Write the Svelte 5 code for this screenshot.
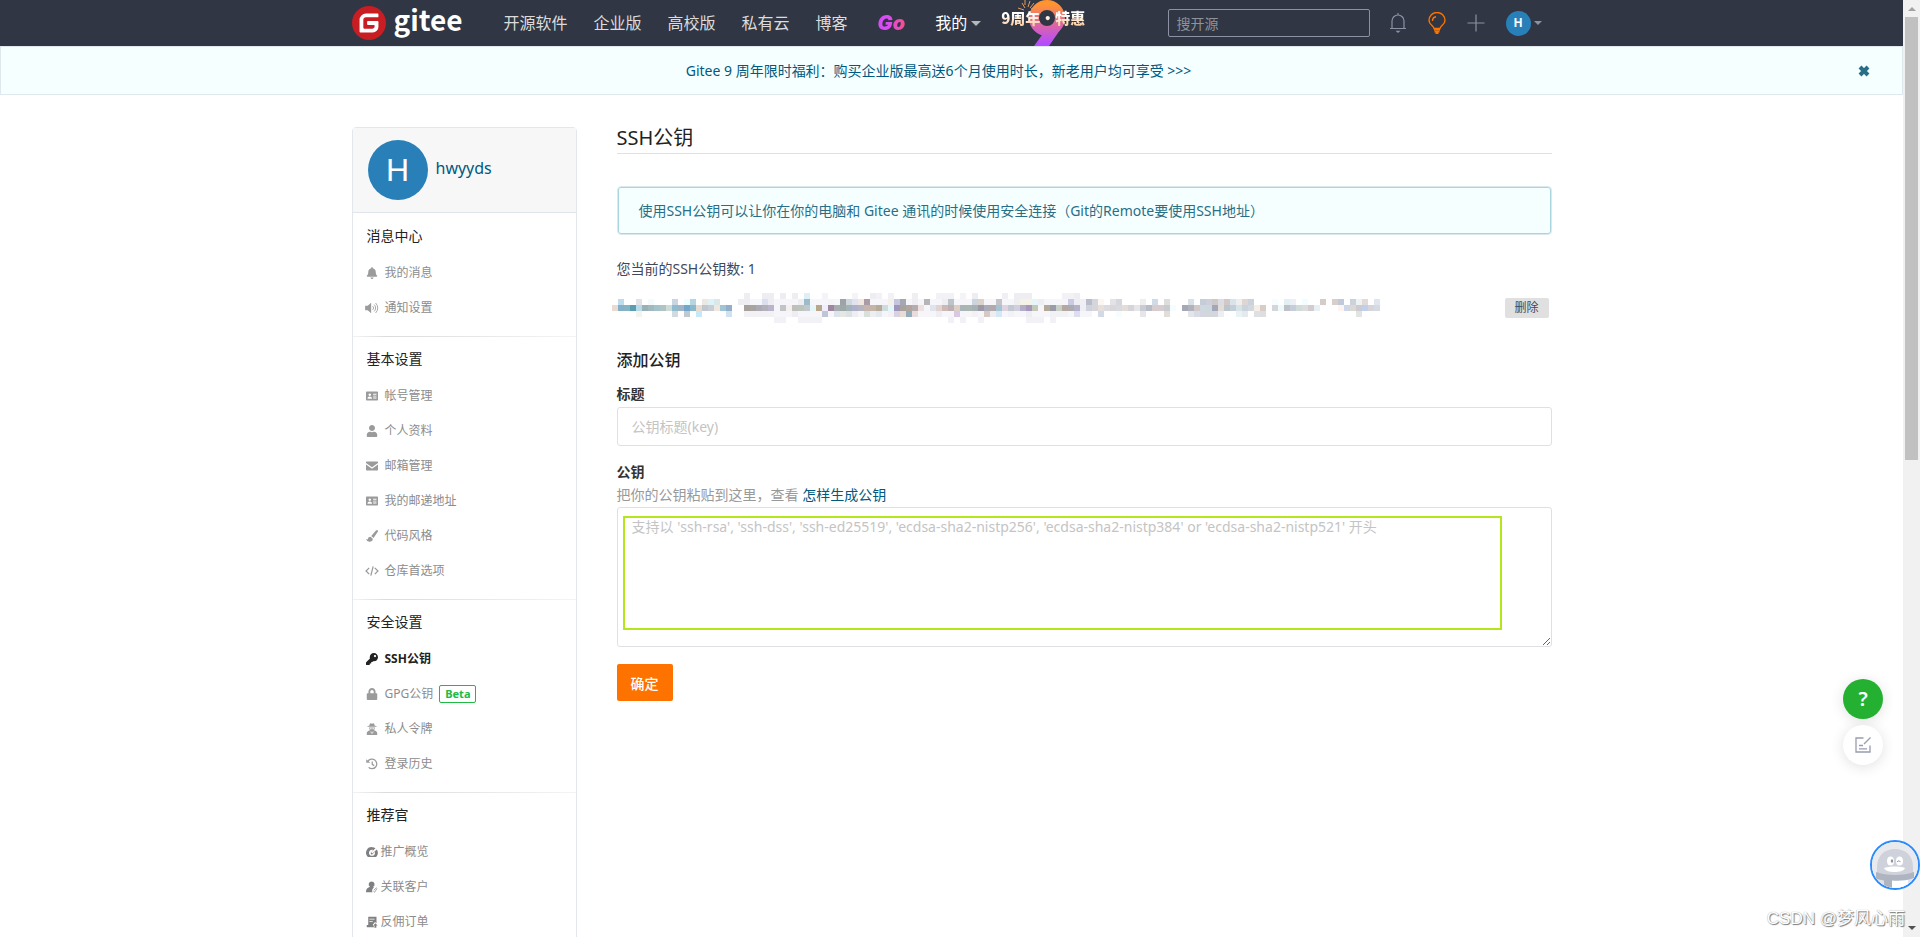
<script>
  const icons = {
    bell: { vb: '0 0 448 512', f: 'M224 512c35.32 0 63.97-28.65 63.97-64H160.03c0 35.35 28.65 64 63.97 64zm215.39-149.71c-19.32-20.76-55.47-51.99-55.47-154.29 0-77.7-54.48-139.9-127.94-155.16V32c0-17.67-14.32-32-31.98-32s-31.98 14.33-31.98 32v20.84C118.56 68.1 64.08 130.3 64.08 208c0 102.3-36.15 133.53-55.47 154.29-6 6.45-8.66 14.16-8.61 21.71.11 16.4 12.98 32 32.1 32h383.8c19.12 0 32-15.6 32.1-32 .05-7.55-2.61-15.27-8.61-21.71z' },
    volume: { vb: '0 0 16 14', wide: true, f: 'M0 4.500h3L7 1v12L3 9.500H0z', s: 'M8.800 4.800a3 3 0 0 1 0 4.400M10.500 3a5.500 5.500 0 0 1 0 8M12.200 1.200a8 8 0 0 1 0 11.600', w: 1 },
    card: { vb: '0 0 16 14', f: 'M1 1h14a1 1 0 0 1 1 1v10a1 1 0 0 1-1 1H1a1 1 0 0 1-1-1V2a1 1 0 0 1 1-1zM5 3.500a1.700 1.700 0 1 0 .1 0zM2 10.500h6c0-2-1.200-3-3-3s-3 1-3 3zM9.500 4v1.300H14V4zM9.500 6.500v1.300H14V6.500zM9.500 9v1.300H14V9z' },
    user: { vb: '0 0 448 512', f: 'M224 256c70.700 0 128-57.300 128-128S294.700 0 224 0 96 57.300 96 128s57.300 128 128 128zm89.600 32h-16.700c-22.200 10.200-46.900 16-72.900 16s-50.600-5.800-72.900-16h-16.700C60.200 288 0 348.200 0 422.400V464c0 26.500 21.500 48 48 48h352c26.500 0 48-21.500 48-48v-41.600c0-74.200-60.200-134.400-134.400-134.400z' },
    mail: { vb: '0 0 16 14', f: 'M1 1h14a1 1 0 0 1 1 1v1L8 8.500 0 3V2a1 1 0 0 1 1-1zM0 5l8 5.500L16 5v7a1 1 0 0 1-1 1H1a1 1 0 0 1-1-1z' },
    brush: { vb: '0 0 16 16', f: 'M15.500.5c.7.7.5 1.500 0 2.300L10 10.500 7 8 13.300.8c.7-.7 1.500-.9 2.200-.3zM6 9l3 2.500c.2 2.500-1.500 4-4 4-2.700 0-4.300-1.300-5-3.500 1.500 1 2.300.7 2.600-.4C3 9.800 4.300 8.900 6 9z' },
    code: { vb: '0 0 20 16', wide: true, s: 'M6 3.500 1.500 8 6 12.500M14 3.500 18.500 8 14 12.500M11.700 1.500 8.300 14.500', w: 1.8 },
    key: { vb: '0 0 512 512', f: 'M512 176.001C512 273.203 433.202 352 336 352c-11.220 0-22.190-1.062-32.827-3.069l-24.012 27.014A23.999 23.999 0 0 1 261.223 384H224v40c0 13.255-10.745 24-24 24h-40v40c0 13.255-10.745 24-24 24H24c-13.255 0-24-10.745-24-24v-78.059c0-6.365 2.529-12.470 7.029-16.971l161.802-161.802C163.108 213.814 160 195.271 160 176 160 78.798 238.797.001 335.999 0 433.488-.001 512 78.511 512 176.001zM336 128c0 26.510 21.490 48 48 48s48-21.490 48-48-21.490-48-48-48-48 21.490-48 48z' },
    lock: { vb: '0 0 448 512', f: 'M400 224h-24v-72C376 68.200 307.800 0 224 0S72 68.200 72 152v72H48c-26.500 0-48 21.500-48 48v192c0 26.500 21.500 48 48 48h352c26.500 0 48-21.500 48-48V272c0-26.500-21.500-48-48-48zm-104 0H152v-72c0-39.700 32.300-72 72-72s72 32.300 72 72v72z' },
    spy: { vb: '0 0 16 16', f: 'M5.500.5C6.500 0 7 .9 8 .9S9.500 0 10.500.5c.6.8 1 2 1.200 3l2.300.6v.9H2v-.9l2.300-.6c.2-1 .6-2.200 1.200-3zM4 6h8c0 1.500-.4 2.800-1.300 3.700 2.600.6 4.300 2.200 4.300 4.300v1.200c0 .5-.3.8-.8.8H1.800c-.5 0-.8-.3-.8-.8V14c0-2.100 1.700-3.700 4.300-4.300C4.400 8.800 4 7.500 4 6zM5 7v1.200h2.500V7zM8.500 7v1.200H11V7zM6 11l1 4 .6-3zM10 11l-1 4-.6-3z' },
    history: { vb: '0 0 16 16', s: 'M2.500 4.500A6.400 6.400 0 1 1 3.500 12.500M8.300 4.500V8.500L11 10.200', w: 1.7, f: 'M.3 1.500 5.800 6.300H.3z' },
    gauge: { vb: '0 0 16 16', f: 'M8 1.500c2 0 3.500.6 4.700 1.600L7 8.200l1.500 1.700 5.800-5.300A7.300 7.300 0 0 1 13.500 14.500H2.500A7.500 7.500 0 0 1 8 1.500zM8 5C5.500 5 4 7 4 9.200 4 11.500 5.800 13 8 13s4-1.500 4-3.800c0-.6-.1-1-.3-1.500L9 10.800c-1.300 1.200-3.500-.6-2.400-2.200L9.500 5.300C9 5.100 8.500 5 8 5z' },
    link: { vb: '0 0 16 16', f: 'M7.500.5a4 4 0 0 1 2.200 7.300c.3.300.5.700.8 1-2 1.500-2.700 3.500-2 6.200H0c0-3.500 1.200-5.800 5.300-7.200A4 4 0 0 1 7.500.5z', s: 'M10.500 12.500l2-2.500 1.500 1-2.500 4-1.500-1M13.500 9l1.500 1', w: 0.9 },
    order: { vb: '0 0 16 16', f: 'M2 1h12v8.500l-2-1.500-3 3.500 2 3.500H1v-3h2V1zM4.500 3.500v1.300h7V3.500zM4.500 6.500v1.300H9V6.500zM12.500 9.500l3 3h-1.700v3h-2.500v-3H9.700z' }
  };

  const sections = [
    { title: '消息中心', items: [['bell', '我的消息'], ['volume', '通知设置']] },
    { title: '基本设置', items: [['card', '帐号管理'], ['user', '个人资料'], ['mail', '邮箱管理'], ['card', '我的邮递地址'], ['brush', '代码风格'], ['code', '仓库首选项']] },
    { title: '安全设置', items: [['key', 'SSH公钥'], ['lock', 'GPG公钥'], ['spy', '私人令牌'], ['history', '登录历史']] },
    { title: '推荐官', compact: true, items: [['gauge', '推广概览'], ['link', '关联客户'], ['order', '反佣订单']] }
  ];

  // Each row of the masked key: runs of "start column: colours".
  const maskRows = [
    '22:eeeef2|25:eeeef2 eeeef2|28:eeeef2|30:eeeef2|32:dff0f5|35:f4f4f8|40:f4f4f8|43:eeeef2 f2f2f6|46:f2f2f6|50:f0eef0|54:f2f2f6 f2f2f6 f2f2f6|58:f4f4f8|60:eeeef2|65:f0f0f4|67:eeeef2 eeeef2 eeeef2|75:f2f2f6 f2f2f6 eeeef2',
    '1:bddcec|4:dfe3e8|6:f2fcff|10:c9d6e2|12:ecffff b5d5e0|15:ede8e0 def3f8 dce8e8|21:eeeef2|22:eeeef2 f6f6fa f6f6fa dcdfee eeeef2 f6f6fa f6f6fa f6f6fa f6f6fa eeeef2 9abccb f6f6fa f6f6fa f6f6fa f4f4f8 f6f6fa 9ea3a8 cfd8de dfe3f2 f0e8e0 ab9ba5 f6f6fa f6f6fa f6f6fa f5f0ea c5c5e0 a5a8b2 f6f6fa eeeef2 f6f6fa b5b5b8 f6f6fa f6f6fa eeeef2 bcc3cb f6f6fa f6f6fa f6f6fa cbd5df dbd2cb f6f6fa f6f6fa c4c4c8 f6f6fa f6f6fa eeeef2 f5f3e6 f5f3e6 e5f5fa eeeef2 f6f6fa f6f6fa f6f6fa f6f6fa cacbe0 eeeef2 f0f0f4 b9bcca d5d5dc fcf6f2|83:e3e3e5 d5d7de|88:eeeeee|90:cfdce8|92:dddddd|96:d8e0e8|98:c5cdd8 cdd0dc cfc8c8 dcdde2 d2c8c8 d8e4ec eeeeee ddd6d2 cbd2da|110:f5fdff|112:e2eff5 ecf0f5|115:f2fdff|118:d5cbc8|120:d8ceca c0c8dc|123:ccd2dc ecf3f2 e3d9d9|127:e0e5ee',
    '0:eadbd0 85b0ca 85b3c4 5b9db0 b5dce8 9ab0b8 a3b8bc a0c3ce b0c4c4 cfdbd8 8fbccf a0b4c8 72a6ca 8ab8cc e8dcd0 bfc8d0 c8ced8 f0e8dc a0c4d4 93aec8|22:a8a09a a8a4a0 acaab4 b3b0ba bbb5cc f6f6fa c0c4c8 f5f0ee bfc0be bcc4bc c0c8cc e4f6fa b8a68a eeeeff 9f869e a5adb0 9fa8a8 a2b3b6 aeafcb b5b5c2 c5b5b0 c4b5a8 b5ab98 d0dcdc e4f6fa a095bb a8a29e b0a49c b4acb0 efe0e0 f6f6fa dfe3ee e0d3d0 ccb8b4 bcb0b4 dccfc4 a8b4b8 a8b8b0 a8b0b4 9c98a8 a8acb8 b5a8ac a4c4d4 dfd3e2 c4c8d4 d0d0dc b4acc8 a498bc c4c8b8 f6f6fa b4a898 9a9caa c8cfc4 b4a8a0 acacac b4b0cc eeeef4 cfd2da d5d5da e6e0dc dcdce0 d8d8dc dadade|85:e3ddd8 d5d5d8 e5e5ea c8ccd2 b8bbc8 d8cccf d8ccd0 c8ccd0 f5fdff|95:a6a8b8 b0b2be cfcac8 cfd8e0 cbd8dc a4a7ba e3ddd8 bcc4cc c4ced8 d8e4e4 cbd4dc d2d8de f5efe8 d8ccc8|110:d5d5dc edfbfb bfc0c8 c5cdda d0dcda dcdcdc d3cccf e8f0f5|121:fdf3f0 ccd8e8 dcd8d4 ccccd0 c0d0ec d5d5da d5dae4',
    '4:f5f3ee|10:d3dade|12:c0c8d0|14:c5e9f5|19:cfe2f0|22:f2f2f6 f2f2f6 f2f2f6 f2f2f6 f2f2f6 f6f6fa f6f6fa f6f6fa eeeef2 f6f6fa f6f6fa f6f6fa f6f6fa bfc5d4 f6f6fa dde3ec e3e8e2 dce2e4 eeeef2 f6f6fa d8e0dc eeeef2 e4e8f0 f6f6fa f2f2f6 dad0e4 e8dcd4 95adba eadcdc f6f6fa f6f6fa f6f6fa eeeef2 f6f6fa f6f6fa d8c8e4 f6f6fa f6f6fa f2f2f6 f6f6fa d8c8c4 eeeef2 d2e8f5 f6f6fa f2f2f6 f6f6fa f6f6fa eeeef2 f6f6fa f6f6fa f6f6fa f2f2f6 f2f2f6 f2f2f6 f6f6fa dcdff0 f6f6fa f6f6fa|81:d2dae6|84:f5fdff|88:e5e5ea|92:e3ddd8|96:e3e5ea d8dbe3 d3d6dc d3d6dc d3d6dc eceef2|104:e8f3f8 e5e8ec|107:dfe0e4 dfdedf|124:e3e3e3',
    '27:f2f2f6 f2f2f6|31:f2f2f6 f2f2f6 f2f2f6 f2f2f6|56:f2f2f6|58:f2f2f6|61:f2f2f6|69:f2f2f6 f2f2f6 f2f2f6|73:f2f2f6'
  ];
  const cells = maskRows.flatMap((row, y) =>
    row.split('|').flatMap((run) => {
      const [start, colours] = run.split(':');
      return colours.split(' ').map((c, i) => ({ x: (Number(start) + i) * 6, y: y * 6, c: '#' + c }));
    })
  );
</script>

{#snippet icon(name)}
  {@const i = icons[name]}
  <svg class="ico" class:wide={i.wide} viewBox={i.vb} aria-hidden="true">
    {#if i.f}<path d={i.f} fill="currentColor" fill-rule="evenodd" />{/if}
    {#if i.s}<path d={i.s} fill="none" stroke="currentColor" stroke-width={i.w} />{/if}
  </svg>
{/snippet}

<div class="screen">
  <div class="page">
    <header>
      <div class="wrap bar">
        <a class="logo" href="#home" aria-label="gitee">
          <svg width="34" height="34" viewBox="0 0 24 24" aria-hidden="true">
            <circle cx="12" cy="12" r="11" fill="#fff" />
            <path fill="#c71d23" d="M11.984 0A12 12 0 0 0 0 12a12 12 0 0 0 12 12 12 12 0 0 0 12-12A12 12 0 0 0 12 0a12 12 0 0 0-.016 0zm6.090 5.333c.328 0 .593.266.592.593v1.482a.594.594 0 0 1-.593.592H9.777c-.982 0-1.778.796-1.778 1.778v5.630c0 .327.266.592.593.592h5.630c.982 0 1.778-.796 1.778-1.778v-.296a.593.593 0 0 0-.592-.593h-4.150a.592.592 0 0 1-.592-.592v-1.482a.593.593 0 0 1 .593-.592h6.815c.327 0 .593.265.593.592v3.408a4 4 0 0 1-4 4H5.926a.593.593 0 0 1-.593-.593V9.778a4.444 4.444 0 0 1 4.445-4.444h8.296z" />
          </svg>
          <span>gitee</span>
        </a>
        <nav>
          <a href="#os">开源软件</a>
          <a href="#ent">企业版</a>
          <a href="#edu">高校版</a>
          <a href="#cloud">私有云</a>
          <a href="#blog">博客</a>
          <a href="#go" class="go">Go</a>
          <a href="#mine" class="mine">我的<i class="caret"></i></a>
        </nav>
        <a class="promo" href="#promo">
          <svg class="nine" width="60" height="46" viewBox="0 0 60 46" aria-hidden="true">
            <defs>
              <linearGradient id="nineFill" gradientUnits="userSpaceOnUse" x1="0" y1="0" x2="0" y2="46">
                <stop offset="0.1" stop-color="#ff9330" />
                <stop offset="0.5" stop-color="#e0689c" />
                <stop offset="0.95" stop-color="#b44cff" />
              </linearGradient>
            </defs>
            <circle cx="27" cy="18" r="13" fill="none" stroke="url(#nineFill)" stroke-width="10" />
            <path d="M22 35 40 30 29 46H14z" fill="url(#nineFill)" />
            <path d="M8 7 10 1M5 8 2 3M4 10-2 8M10 8l4-5M5 5 5 0M11 9l6-2" stroke="#e89a58" stroke-width="1" fill="none" />
          </svg>
          <span>9周年·特惠</span>
        </a>
        <input class="search" type="search" placeholder="搜开源" aria-label="搜开源" />
        <div class="tools">
          <a href="#notice" aria-label="通知">
            <svg width="18" height="22" viewBox="0 0 18 22" fill="none" stroke="#8c92a4" stroke-width="1.2">
              <path d="M9 1v1.500M3 16.500V9a6 6 0 0 1 12 0v7.500M1 16.500h16" />
              <path d="M6.500 18.800h5L9 21z" fill="#8c92a4" stroke="none" />
            </svg>
          </a>
          <a href="#tips" aria-label="提示">
            <svg width="18" height="22" viewBox="0 0 18 22" fill="none" stroke="#fe7300" stroke-width="1.400">
              <path d="M6 16.500C5.500 13.500 1 12.500 1 8.500a8 8 0 0 1 16 0c0 4-4.500 5-5 8zM4.500 9C4.500 6.500 6 5 8 4.700M6 18h6M6.500 19.700h5M7.500 21.300h3" />
            </svg>
          </a>
          <a href="#new" aria-label="新建">
            <svg width="18" height="18" viewBox="0 0 18 18"><path d="M9 0.500v17M.5 9h17" stroke="#8c92a4" stroke-width="1.200" /></svg>
          </a>
          <a href="#me" class="me"><b>H</b><i class="caret"></i></a>
        </div>
      </div>
    </header>

    <div class="notice">
      <a href="#gift">Gitee 9 周年限时福利：购买企业版最高送6个月使用时长，新老用户均可享受 &gt;&gt;&gt;</a>
      <button type="button" aria-label="关闭">
        <svg width="12" height="12" viewBox="0 0 12 12"><path d="M2 2l8 8M10 2l-8 8" stroke="#276f86" stroke-width="4" /></svg>
      </button>
    </div>

    <div class="wrap content">
      <aside>
        <div class="profile">
          <span class="avatar">H</span>
          <a href="#profile">hwyyds</a>
        </div>
        {#each sections as s}
          <section class:compact={s.compact}>
            <h2>{s.title}</h2>
            <ul>
              {#each s.items as [ic, label]}
                <li>
                  <a class="item" href="#{label}" class:active={label === 'SSH公钥'}>
                    <span class="slot">{@render icon(ic)}</span>{label}
                    {#if label === 'GPG公钥'}<em>Beta</em>{/if}
                  </a>
                </li>
              {/each}
            </ul>
          </section>
        {/each}
      </aside>

      <main>
        <h1>SSH公钥</h1>
        <p class="message">使用SSH公钥可以让你在你的电脑和 Gitee 通讯的时候使用安全连接（Git的Remote要使用SSH地址）</p>
        <p class="count">您当前的SSH公钥数: 1</p>
        <div class="keyrow">
          <svg width="768" height="30" viewBox="0 0 768 30" shape-rendering="crispEdges" aria-hidden="true">
            {#each cells as c}<rect x={c.x} y={c.y} width="6" height="6" fill={c.c} />{/each}
          </svg>
          <button type="button">删除</button>
        </div>
        <form onsubmit={(e) => e.preventDefault()}>
          <h3>添加公钥</h3>
          <label for="key-title">标题</label>
          <input id="key-title" type="text" placeholder="公钥标题(key)" />
          <label for="key-body">公钥</label>
          <p class="help">把你的公钥粘贴到这里，查看 <a href="#howto">怎样生成公钥</a></p>
          <div class="area">
            <textarea id="key-body" placeholder="支持以 'ssh-rsa', 'ssh-dss', 'ssh-ed25519', 'ecdsa-sha2-nistp256', 'ecdsa-sha2-nistp384' or 'ecdsa-sha2-nistp521' 开头"></textarea>
            <div class="mark"></div>
          </div>
          <button class="submit" type="submit">确定</button>
        </form>
      </main>
    </div>
  </div>

  <div class="scroll" aria-hidden="true">
    <i class="up"></i>
    <i class="thumb"></i>
    <i class="down"></i>
  </div>

  <div class="float">
    <button type="button" class="ask">?</button>
    <button type="button" class="edit" aria-label="反馈">
      <svg width="16" height="16" viewBox="0 0 16 16" fill="none" stroke="#989caf" stroke-width="1.300">
        <path d="M8.500 1H1v14h14V8.500M15.500.500 9 7M4 8.500h4M4 11.800h8" />
      </svg>
    </button>
  </div>

  <div class="pet" aria-hidden="true">
    <svg viewBox="0 0 46 46">
      <rect width="46" height="46" fill="#e8eaee" />
      <path d="M5 34V25C5 13 13 7 23 7s18 6 18 18v9z" fill="#cfd2da" />
      <path d="M6 36h34v10H6z" fill="#dfe2e8" />
      <path d="M20 38h16v8H20z" fill="#fff" />
      <path d="M4 30c10 4 28 4 38 0v6c-8 3-16 3-22 2.500V46h-8v-7.500L4 37z" fill="#aeb5c0" />
      <ellipse cx="18.500" cy="19" rx="3.500" ry="4.500" fill="#fff" />
      <ellipse cx="27.500" cy="19" rx="3.500" ry="4.500" fill="#fff" />
      <ellipse cx="20" cy="19" rx="1.200" ry="1.800" fill="#8c92a0" />
      <path d="M25 20c1-1.500 2.500-1.500 3.500 0" stroke="#8c92a0" fill="none" />
      <path d="M12 26c6-2 16-2 21 0-1 3-6 4-10.500 4S13 29 12 26z" fill="#fff" />
    </svg>
  </div>
  <div class="credit">CSDN @梦风心雨</div>
</div>

<style>
  :global(body) { margin: 0; background: #fff; }
  .screen, .screen * { box-sizing: border-box; }
  .screen {
    position: relative;
    display: grid;
    grid-template-columns: minmax(0, 1fr) 17px;
    height: 100vh;
    overflow: hidden;
    font: 14px/20px "Noto Sans", "Noto Sans CJK SC", sans-serif;
    color: #40485b;
  }
  .page { overflow: hidden; min-width: 0; }
  a { text-decoration: none; color: #005980; }
  button, input, textarea { font-family: inherit; }
  p, h1, h2, h3, ul { margin: 0; padding: 0; }
  i { font-style: normal; }
  .wrap { max-width: 1200px; margin: 0 auto; }

  header { background: #303643; height: 46px; overflow: hidden; }
  .bar { display: flex; align-items: center; height: 46px; }
  .logo { display: flex; align-items: center; gap: 8px; width: 152px; }
  .logo span { font: 700 28px/34px "Noto Sans CJK SC", sans-serif; color: #fff; padding-bottom: 8px; }
  nav { display: flex; align-items: center; gap: 26px; font-size: 16px; white-space: nowrap; }
  nav a { color: #dcdcdc; }
  nav .go {
    font: italic 900 20px/24px Inter, sans-serif;
    padding: 0 4px;
    background: linear-gradient(90deg, #d84cf5 40%, #ff4f6c);
    background-clip: text;
    color: transparent;
  }
  nav .mine { color: #fff; display: flex; align-items: center; gap: 4px; }
  .caret { border: 5px solid transparent; border-top-color: #b4b7be; border-bottom: 0; }
  .promo { position: relative; margin-left: 20px; height: 46px; width: 90px; }
  .nine { position: absolute; left: 19px; top: 0; overflow: visible; }
  .promo span {
    position: relative;
    display: block;
    padding-top: 6px;
    font: 900 15px/24px "Noto Sans CJK SC", sans-serif;
    white-space: nowrap;
    background: linear-gradient(#fff 50%, #ffb878);
    background-clip: text;
    color: transparent;
  }
  .search {
    margin-left: auto;
    width: 202px;
    height: 28px;
    border: 1px solid #8c92a4;
    border-radius: 2px;
    background: transparent;
    padding: 0 8px;
    font-size: 14px;
    color: #fff;
  }
  .search::placeholder { color: #8e929b; }
  .tools { display: flex; align-items: center; gap: 21px; width: 182px; padding-left: 19px; }
  .tools a { display: flex; align-items: center; }
  .tools .me { gap: 3px; }
  .me b {
    width: 25px; height: 25px; border-radius: 50%; background: #2980b9; color: #fff;
    font: 700 12px/25px "Liberation Sans", sans-serif; text-align: center;
  }
  .me .caret { border-width: 4px 4px 0; border-top-color: #8c92a4; }

  .notice {
    display: flex; align-items: center; height: 49px; padding: 0 32px 0 0;
    border: 1px solid #dfe8ec; background: #f6ffff;
  }
  .notice a { flex: 1; text-align: center; padding-left: 18px; }
  .notice button { border: 0; background: none; padding: 0; display: flex; }

  .content { display: flex; gap: 40px; padding-top: 32px; align-items: flex-start; }
  aside { flex: 0 0 225px; border: 1px solid #e3e7ec; border-radius: 4px; }
  .profile {
    display: flex; align-items: center; gap: 8px; height: 85px; padding: 0 15px;
    background: #f7f7f8; border-bottom: 1px solid #dfe5ea; font-size: 16px;
  }
  .profile a { padding-bottom: 4px; }
  .avatar {
    width: 60px; height: 60px; border-radius: 50%; background: #2980b9; color: #fff;
    font: 32px/60px "Liberation Sans", sans-serif; text-align: center;
  }
  section { padding: 12px 0 11px 13px; border-top: 1px solid; border-image: linear-gradient(90deg, #f4f4f4, #dcdcdc 15%, #f4f4f4) 1; }
  .profile + section { border-color: transparent; border-image: none; }
  h2 { font-size: 14px; line-height: 20px; font-weight: 400; color: #222; padding: 0 0 9px 1px; }
  ul { list-style: none; }
  .item { display: flex; align-items: center; height: 35px; font-size: 12px; color: #8c8c8c; }
  .item.active { color: #222; font-weight: 700; }
  .slot { display: flex; justify-content: center; width: 12px; margin-right: 7px; color: #9b9b9b; }
  .active .slot { color: #222; }
  .compact .slot { margin-right: 3px; color: #808080; }
  .ico { width: 12px; height: 12px; flex: none; }
  .wide { width: 14px; }
  em {
    font: 700 11px/16px "Noto Sans", sans-serif; color: #21ba45; border: 1px solid #21ba45;
    border-radius: 2px; padding: 0 5px; margin-left: 6px;
  }

  main { flex: 1; min-width: 0; }
  h1 { font-size: 20px; line-height: 22px; font-weight: 400; color: #222; padding-bottom: 4px; border-bottom: 1px solid #dfe0e4; }
  .message {
    margin-top: 32px; height: 49px; line-height: 47px; padding: 0 21px; color: #276f86;
    background: #f6ffff; border: 1px solid #dbe9ee; box-shadow: inset 0 0 0 1px #a9d5de; border-radius: 4px;
  }
  .count { margin-top: 24px; }
  .keyrow { display: flex; align-items: center; justify-content: space-between; margin: 14px 3px 0 -5px; }
  .keyrow button {
    width: 44px; height: 20px; border: 0; border-radius: 2px; background: #e0e0e0;
    color: #40485b; font-size: 12px; line-height: 20px; padding: 0;
  }
  h3 { margin-top: 27px; font-size: 16px; line-height: 20px; font-weight: 500; color: #222; }
  label { display: block; font-weight: 700; color: #333; margin-top: 14px; line-height: 20px; }
  #key-title {
    display: block; width: 100%; height: 39px; margin-top: 3px; padding: 0 14px;
    border: 1px solid #dfe0e6; border-radius: 3px; font-size: 14px; background: #fff;
  }
  #key-title + label { margin-top: 16px; }
  .help { color: #999; margin-top: 3px; }
  .area { position: relative; margin-top: 2px; }
  textarea {
    display: block; width: 100%; height: 140px; padding: 9px 14px;
    border: 1px solid #dfe0e6; border-radius: 3px; font-size: 14px; line-height: 20px; background: #fff;
  }
  #key-title::placeholder, textarea::placeholder { color: #c4c4c4; }
  .mark { position: absolute; left: 6px; right: 50px; top: 9px; height: 114px; border: 2px solid #b5e61d; pointer-events: none; }
  .submit {
    margin-top: 17px; width: 56px; height: 37px; border: 0; border-radius: 2px;
    background: #fe7300; color: #fff; font-size: 14px; font-weight: 500; padding: 0;
  }

  .scroll { display: flex; flex-direction: column; align-items: center; background: #f1f1f1; padding: 7px 0; }
  .up { border: 4px solid transparent; border-top: 0; border-bottom-color: #a3a3a3; }
  .thumb { width: 13px; height: 48%; margin-top: 6px; background: #c1c1c1; }
  .down { margin-top: auto; border: 4px solid transparent; border-bottom: 0; border-top-color: #505050; }

  .float { position: absolute; right: 37px; bottom: 172px; display: flex; flex-direction: column; gap: 6px; }
  .float button {
    width: 40px; height: 40px; border: 0; border-radius: 50%; padding: 0;
    display: flex; align-items: center; justify-content: center; box-shadow: 0 2px 14px rgba(0, 0, 0, 0.12);
  }
  .float .ask { background: #24b132; color: #fff; font: 600 20px/40px "Noto Sans", sans-serif; }
  .float .edit { background: #fff; }
  .pet { position: absolute; right: 0; bottom: 47px; width: 50px; height: 50px; border: 2px solid #2c8cff; border-radius: 50%; overflow: hidden; }
  .pet svg { display: block; }
  .credit {
    position: absolute; right: 15px; bottom: 6px; font: 17px/24px "Liberation Sans", "Noto Sans CJK SC", sans-serif;
    color: #fff; text-shadow: 1px 1px 1px #777, 0 0 1px #999;
  }
</style>
